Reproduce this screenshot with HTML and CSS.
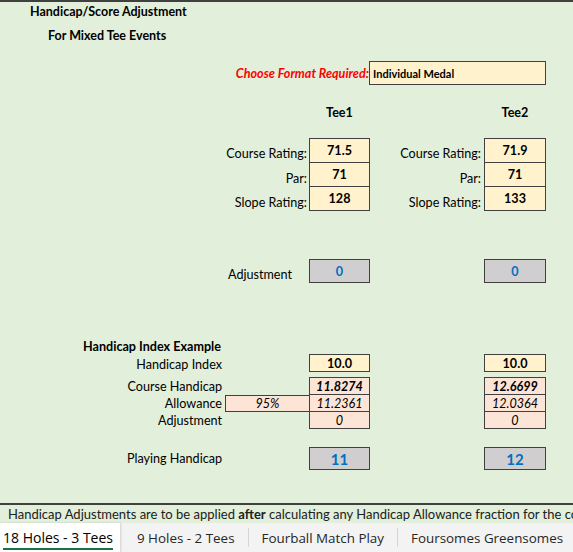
FILE: index.html
```html
<!DOCTYPE html>
<html lang="en">
<head>
    <meta charset="UTF-8">
    <meta name="viewport" content="width=device-width, initial-scale=1.0">
    <title>Handicap/Score Adjustment</title>
    <link rel="stylesheet" href="styles.css">
</head>
<body>
    <div class="page">
        <div class="sheet">
            <div class="title">Handicap/Score Adjustment</div>
            <div class="subtitle">For Mixed Tee Events</div>

            <div class="grid format-row">
                <div class="format-label">Choose Format Required:</div>
                <div class="cell input format-box">Individual Medal</div>
            </div>

            <div class="grid tee-head">
                <div class="c3">Tee1</div>
                <div class="c5">Tee2</div>
            </div>

            <div class="grid ratings">
                <div class="label-left">Course Rating:</div>
                <div class="cell input first c3">71.5</div>
                <div class="label-mid">Course Rating:</div>
                <div class="cell input first c5">71.9</div>

                <div class="label-left">Par:</div>
                <div class="cell input c3">71</div>
                <div class="label-mid">Par:</div>
                <div class="cell input c5">71</div>

                <div class="label-left">Slope Rating:</div>
                <div class="cell input c3">128</div>
                <div class="label-mid">Slope Rating:</div>
                <div class="cell input c5">133</div>
            </div>

            <div class="grid adjust-row">
                <div class="adj-label">Adjustment</div>
                <div class="cell result first c3">0</div>
                <div class="cell result first c5">0</div>
            </div>

            <div class="example-title">Handicap Index Example</div>

            <div class="grid index-row">
                <div class="label-a">Handicap Index</div>
                <div class="cell input first c3 bold">10.0</div>
                <div class="cell input first c5 bold">10.0</div>
            </div>

            <div class="grid calc">
                <div class="label-a">Course Handicap</div>
                <div class="cell calc-cell first c3 bold italic">11.8274</div>
                <div class="cell calc-cell first c5 bold italic">12.6699</div>

                <div class="label-a">Allowance</div>
                <div class="cell calc-cell allowance italic">95%</div>
                <div class="cell calc-cell c3 italic">11.2361</div>
                <div class="cell calc-cell c5 italic">12.0364</div>

                <div class="label-a">Adjustment</div>
                <div class="cell calc-cell c3 italic">0</div>
                <div class="cell calc-cell c5 italic">0</div>
            </div>

            <div class="grid playing-row">
                <div class="label-a">Playing Handicap</div>
                <div class="cell result big first c3">11</div>
                <div class="cell result big first c5">12</div>
            </div>
        </div>

        <div class="status">Handicap Adjustments are to be applied <b>after</b> calculating any Handicap Allowance fraction for the co</div>

        <div class="tabs">
            <div class="tab active"><span>18 Holes - 3 Tees</span></div>
            <div class="tab">9 Holes - 2 Tees</div>
            <div class="tab">Fourball Match Play</div>
            <div class="tab last">Foursomes Greensomes</div>
        </div>
    </div>
</body>
</html>
```

FILE: styles.css
```css
body {
    margin: 0;
    font-family: Lato, "Liberation Sans", sans-serif;
    font-size: 12.6px;
    color: #000;
    background-color: #e2efda;
}
.page {
    width: 573px;
    height: 552px;
    display: flex;
    flex-direction: column;
    overflow: hidden;
}
.sheet {
    flex: 1;
    border-top: 2px solid #404040;
    border-bottom: 2px solid #404040;
    background-color: #e2efda;
}
.title {
    height: 18px;
    line-height: 19px;
    padding-left: 30px;
    font-weight: bold;
    font-size: 12.5px;
}
.subtitle {
    margin-top: 6px;
    height: 18px;
    line-height: 19px;
    padding-left: 48px;
    font-weight: bold;
    font-size: 12.5px;
}
.grid {
    display: grid;
    grid-template-columns: 225px 84px 61px 114px 62px;
}
.c3 {
    grid-column: 3;
}
.c5 {
    grid-column: 5;
}
.cell {
    box-sizing: border-box;
    border: 1px solid #404040;
    border-top: none;
    text-align: center;
    display: flex;
    align-items: center;
    justify-content: center;
}
.cell.first {
    border-top: 1px solid #404040;
}
.input {
    background-color: #fff2cc;
    font-weight: bold;
}
.result {
    background-color: #d0cece;
    color: #0070c0;
    font-weight: bold;
}
.calc-cell {
    background-color: #fce4d6;
}
.bold {
    font-weight: bold;
}
.italic {
    font-style: italic;
}

.format-row {
    margin-top: 17px;
    height: 24px;
}
.format-label {
    grid-column: 1 / 3;
    text-align: right;
    color: #ff0000;
    font-weight: bold;
    font-style: italic;
    align-self: center;
    margin-right: -60px;
}
.format-box {
    grid-column: 3 / 6;
    border-top: 1px solid #404040;
    margin-left: 60px;
    justify-content: flex-start;
    padding-left: 3px;
    font-size: 11px;
}

.tee-head {
    margin-top: 19px;
    height: 18px;
    line-height: 18px;
    font-weight: bold;
    text-align: center;
}

.ratings {
    margin-top: 16px;
    grid-template-rows: 25px 24px 24px;
}
.label-left {
    grid-column: 1 / 3;
    text-align: right;
    padding-right: 2px;
    align-self: center;
    padding-top: 6px;
}
.label-mid {
    grid-column: 4;
    text-align: right;
    padding-right: 3px;
    align-self: center;
    padding-top: 6px;
}

.adjust-row {
    margin-top: 48px;
    height: 24px;
}
.adj-label {
    grid-column: 2;
    padding-left: 3px;
    padding-top: 7px;
    align-self: center;
}

.example-title {
    margin-top: 55px;
    height: 16px;
    line-height: 17px;
    padding-left: 83px;
    font-weight: bold;
}
.label-a {
    grid-column: 1;
    text-align: right;
    padding-right: 3px;
    align-self: center;
}
.index-row {
    height: 18px;
}
.index-row .label-a {
    padding-top: 3px;
}
.calc {
    margin-top: 5px;
    grid-template-rows: 18px 17px 17px;
}
.allowance {
    grid-column: 2;
    border-top: 1px solid #404040;
    border-right: none;
}
.playing-row {
    margin-top: 18px;
    height: 23px;
}
.big {
    font-size: 15px;
}

.status {
    height: 18px;
    line-height: 18px;
    padding-left: 8px;
    white-space: nowrap;
    overflow: hidden;
    color: #202020;
    background-color: #e2efda;
    font-size: 13px;
}
.tabs {
    height: 29px;
    display: flex;
    background-color: #f3f3f3;
    font-family: "Open Sans", "Noto Sans", sans-serif;
    font-size: 13.4px;
    color: #262626;
    white-space: nowrap;
}
.tab {
    flex-shrink: 0;
    display: flex;
    align-items: center;
    padding: 0 13px;
    border-right: 1px solid #d6d6d6;
    margin: 5px 0;
}
.tab.last {
    border-right: none;
}
.tab.active {
    margin: 0 4px 0 0;
    padding: 0 7px 0 3px;
    background-color: #fff;
    border-right: none;
    box-shadow: 1px 0 2px rgba(0, 0, 0, 0.15);
    color: #000;
    font-size: 14px;
}
.tab.active span {
    border-bottom: 2px solid #1e7145;
    padding: 2px 0 1px;
}
```
